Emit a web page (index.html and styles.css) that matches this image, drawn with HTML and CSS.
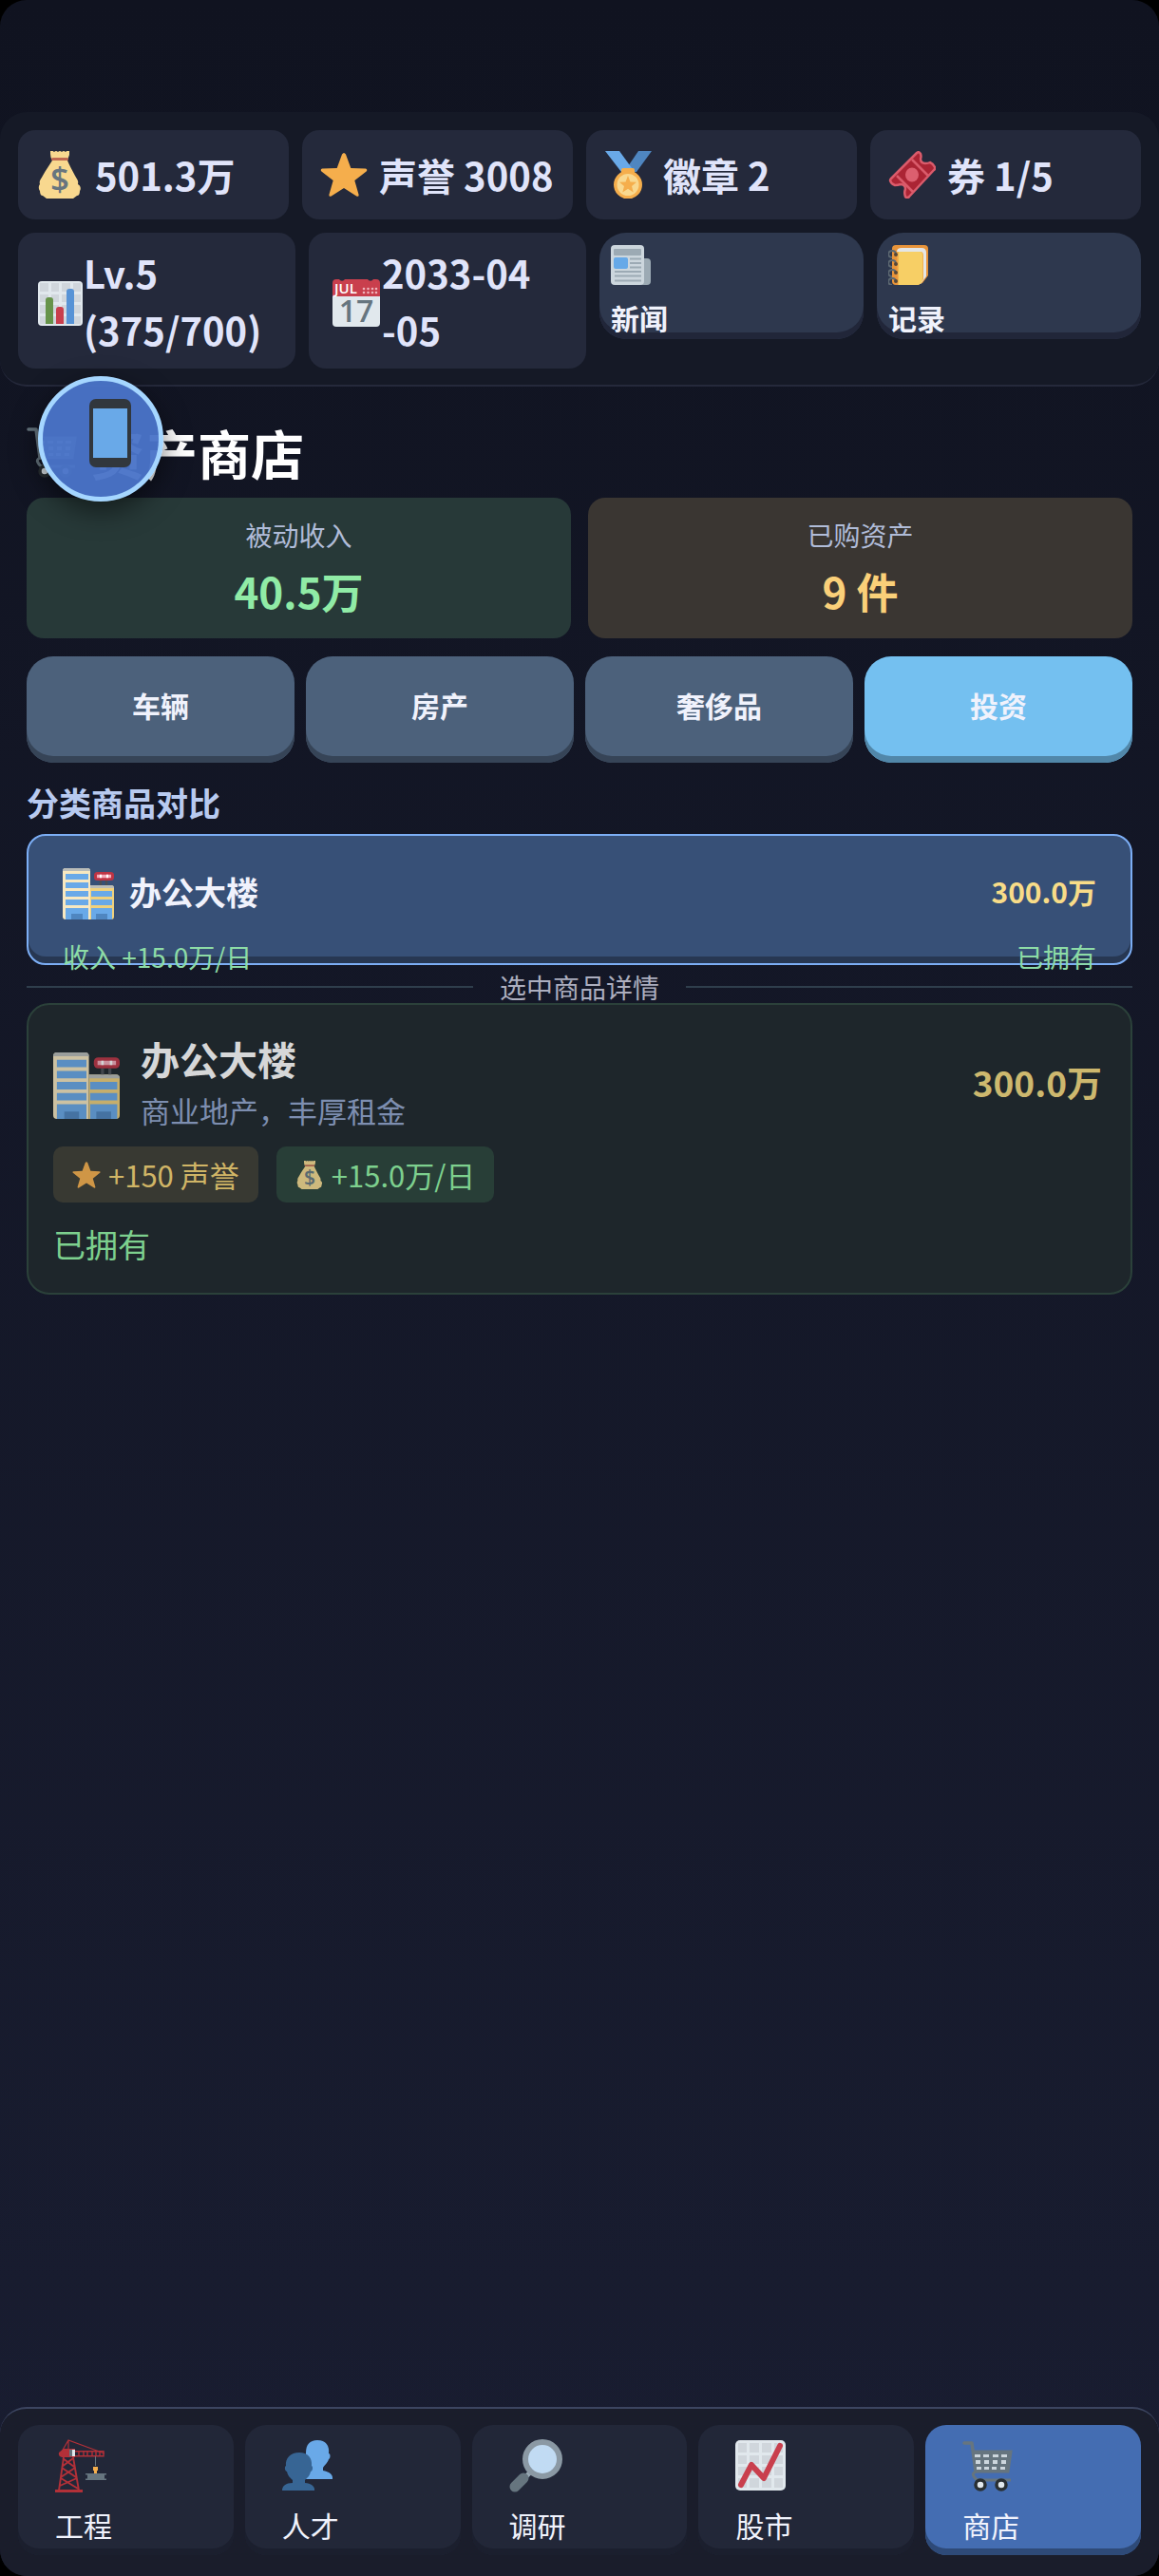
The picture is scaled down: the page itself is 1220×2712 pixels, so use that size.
FILE: index.html
```html
<!DOCTYPE html>
<html lang="zh-CN">
<head>
<meta charset="utf-8">
<meta name="viewport" content="width=device-width, initial-scale=1">
<title>资产商店</title>
<link rel="stylesheet" href="styles.css">
</head>
<body>
<svg class="sprite" aria-hidden="true">
  <symbol id="i-bag" viewBox="0 0 50 50">
    <path d="M15 0q2-1 4 1q2-2 4 0q2-2 4 0q2-2 4 0q2-2 4-1v4q-1 3-2 5H17q-2-2-2-6z" fill="#f8d88f"/>
    <path d="M17 10h16c2 5 5 10 8 16c2 4 4 5 3 9c2 1 4 4 2 7c0 3-1 5-3 5l-4 3H11l-4-3c-2 0-3-2-3-5c-2-3-1-6 0-7c-1-4 1-5 3-9c3-6 7-11 10-16z" fill="#f8d88f"/>
    <rect x="16" y="7" width="18" height="3" rx="1.500" fill="#bf6952"/>
  </symbol>
  <symbol id="i-star" viewBox="0 0 50 50">
    <path d="M27 3.500l5.300 14.500l15.500 .6q2.500 .8 .8 2.800l-12.300 9.700l4.300 14.800q.3 2.700-2.300 1.700L25 39.100L11.700 47.600q-2.600 1-2.300-1.700l4.300-14.800L1.400 21.400q-1.700-2 .8-2.800l15.500-.6L23 3.500q2-3 4 0z" fill="#f5ae4c"/>
  </symbol>
  <symbol id="i-medal" viewBox="0 0 50 50">
    <path d="M36 0h14L34 22H21z" fill="#4f86c0"/><path d="M1 0h15l16 22H18z" fill="#69a9e8"/>
    <rect x="18" y="18" width="14" height="7" rx="2" fill="#f5ae4c"/>
    <circle cx="25" cy="35.500" r="15" fill="#f5ae4c"/><circle cx="25" cy="35.500" r="11.500" fill="#f8d88f"/>
    <path d="M25 26l2.500 6.500l6.500 .3l-5 4.200l1.700 6.500L25 39.800l-5.700 3.700L21 37l-5-4.200l6.500-.3z" fill="#f5ae4c"/>
  </symbol>
  <symbol id="i-ticket" viewBox="0 0 50 50">
    <path d="M30 2q2-2 4 1q1 3 0 5q0 5 5 5q3 0 5-1q3 1 5 5q.500 2-1 3L22 48q-2 2-4 0q-1.500-4 0-8q0-5-5-5q-3 1-6 1q-4-1-5-5q0-1 1-2z" fill="#ab2434" stroke="#da5b6b" stroke-width="2.500" stroke-linejoin="round"/>
    <path d="M25 9l17 17M9 26l17 17" stroke="#da5b6b" stroke-width="2.500"/>
    <ellipse cx="25" cy="25" rx="7" ry="7.500" fill="#dc5f6f"/>
  </symbol>
  <symbol id="i-bars" viewBox="0 0 50 50">
    <rect x="2" y="2" width="47" height="47" rx="4" fill="#e1e8ed"/>
    <path d="M4 4h9v9H4zM16 4h8v9h-8zM27 4h9v9h-9zM39 4h8v9h-8zM4 16h9v8H4zM16 16h8v8h-8zM27 16h9v8h-9zM39 16h8v8h-8zM4 27h9v9H4zM16 27h8v9h-8zM27 27h9v9h-9zM39 27h8v9h-8zM4 39h9v8H4zM16 39h8v8h-8zM27 39h9v8h-9zM39 39h8v8h-8z" fill="#d0d6dc"/>
    <path d="M10 47V22a3 3 0 0 1 3-3h2a3 3 0 0 1 3 3v25z" fill="#66934a"/><path d="M21 47V32a3 3 0 0 1 3-3h2a3 3 0 0 1 3 3v15z" fill="#c93f4d"/><path d="M32 47V13a3 3 0 0 1 3-3h2a3 3 0 0 1 3 3v34z" fill="#5793d6"/>
  </symbol>
  <symbol id="i-news" viewBox="0 0 42 42">
    <rect x="30" y="14" width="12" height="28" rx="4" fill="#9caab4"/>
    <rect width="35" height="42" rx="4" fill="#ccd6dd"/>
    <rect x="3" y="4" width="29" height="7" rx="1" fill="#9caab4"/><rect x="3" y="13" width="15" height="12" rx="2" fill="#66a9e8"/>
    <path d="M20 14.500h12M20 19h12M20 23.500h12M4 28h28M4 32.500h28M4 37.500h28" stroke="#9caab4" stroke-width="2.200"/>
  </symbol>
  <symbol id="i-book" viewBox="0 0 42 42">
    <path d="M8 0h30a4 4 0 0 1 4 4v28l-6 8l-6 2H8a4 4 0 0 1-4-4V4a4 4 0 0 1 4-4z" fill="#e8943a"/>
    <path d="M9 7q0-4 5-4h21q5 0 5 5v25l-6 8z" fill="#e4e6e6"/>
    <path d="M9 7h25q3 0 3 4v25l-5 6H10z" fill="#f2b04c"/>
    <path d="M11 7h22q3 0 3 4v24q0 7-6 7H11z" fill="#f7cf65"/>
    <g fill="none" stroke="#5d6972" stroke-width="2"><path d="M8 9a4 3.500 0 1 0-4 4M8 19a4 3.500 0 1 0-4 4M8 29a4 3.500 0 1 0-4 4M8 38a4 3.500 0 1 0-4 4"/></g>
    <g fill="#55483a"><circle cx="8" cy="10" r="2"/><circle cx="8" cy="20" r="2"/><circle cx="8" cy="29" r="2"/><circle cx="8" cy="38" r="2"/></g>
  </symbol>
  <symbol id="i-phone" viewBox="0 0 44 72">
    <rect width="44" height="72" rx="7" fill="#31373d"/><rect x="4" y="10" width="36" height="52" fill="#69a9e8"/>
  </symbol>
  <symbol id="i-office" viewBox="0 0 54 54">
    <path d="M0 3q0-3 3-3h23q3 0 3 3v51H3q-3 0-3-3z" fill="#f8e8c0"/><path d="M29 18h22q3 0 3 3v30q0 3-3 3H29z" fill="#f0d17c"/>
    <path d="M0 3q0-3 3-3h23q3 0 3 3zM29 21v-3h22q3 0 3 3z" fill="#b9bcb9"/>
    <path d="M3 6h24v6H3zM3 15h24v6H3zM3 24h24v6H3zM3 33h24v6H3zM30 24h22v6H30zM30 33h22v6H30zM3 42h24v12H3zM30 42h22v12H30z" fill="#69a9e8"/>
    <path d="M9 48h12v6H9zM35 48h12v6H35z" fill="#4f86c0"/>
    <path d="M40 13v5M46 13v5" stroke="#4a4f55" stroke-width="2.500"/>
    <rect x="33" y="4" width="21" height="9" rx="3.500" fill="#bd3444"/><path d="M36 8.500h15" stroke="#f4abba" stroke-width="3.500"/><path d="M39 8.500h2M46 8.500h2" stroke="#fff" stroke-width="3.500"/>
  </symbol>
  <symbol id="i-crane" viewBox="0 0 56 56">
    <g fill="none" stroke="#b23038">
      <path d="M7 13L14 1l38 14M14 1v14" stroke-width="1.200"/>
      <path d="M18 12.800h33v5H18zM25 13v5M30 13v5M34 13v5M39 13v5M43 13v5M47 13v5" stroke-width="1.400"/>
      <path d="M9 19L4 54M19 19l6 35M8 20l12 9M19 20L7 29M7 30l15 10M21 30L6 40M6 41l18 11M23 41L5 49" stroke-width="1.900"/>
    </g>
    <path d="M9 10h12v9H7q-4-1-3-5z" fill="#b23038"/><path d="M0 53h29v3H0z" fill="#b23038"/>
    <rect x="15" y="11" width="3" height="7" fill="#66757f"/><rect x="18" y="11" width="3" height="7" fill="#e1e8ed"/>
    <path d="M42.500 18v10" stroke="#66757f"/><path d="M40 29h5v4h-1v3h-3v-3h-1z" fill="#f5ae4c"/><path d="M32 36h22v1.500h-2v4h2V43H32v-1.500h2v-4h-2z" fill="#66757f"/>
  </symbol>
  <symbol id="i-people" viewBox="0 0 56 56">
    <path d="M37 1c9 0 13 6 12 14c2 0 2 5 0 6c-1 4-5 7-6 9v3c6 1 11 4 10 9H25V14C25 6 29 1 37 1z" fill="#69a9e8"/>
    <path d="M18 14c9 0 14 6 13 14c2 1 1 6-1 6c-1 5-4 7-6 9v3c6 0 11 4 10 8H0c0-5 4-8 11-8v-3c-2-2-5-4-6-9c-2 0-3-5-1-6c-1-8 5-14 14-14z" fill="#376594"/>
  </symbol>
  <symbol id="i-search" viewBox="0 0 56 56">
    <path d="M16 41l7-7" stroke="#99aab5" stroke-width="5"/><path d="M15 41L6 50" stroke="#66757f" stroke-width="11" stroke-linecap="round"/>
    <circle cx="35" cy="21" r="18" fill="#c1dbf3" stroke="#8b99a4" stroke-width="6"/>
  </symbol>
  <symbol id="i-trend" viewBox="0 0 56 56">
    <rect y="1" width="53" height="53" rx="5" fill="#e1e8ed"/>
    <path d="M3 4h9v10H3zM15 4h10v10H15zM28 4h10v10H28zM41 4h9v10h-9zM3 17h9v9H3zM15 17h10v9H15zM28 17h10v9H28zM41 17h9v9h-9zM3 29h9v9H3zM15 29h10v9H15zM28 29h10v9H28zM41 29h9v9h-9zM3 41h9v10H3zM15 41h10v10H15zM28 41h10v10H28zM41 41h9v10h-9z" fill="#d0d6dc"/>
    <path d="M6 48l11-21l13 14L47 7" fill="none" stroke="#c93f4d" stroke-width="6" stroke-linecap="round" stroke-linejoin="round"/>
  </symbol>
  <symbol id="i-cart" viewBox="0 0 56 56">
    <path d="M2 4h8l4 30" fill="none" stroke="#66757f" stroke-width="3.500" stroke-linecap="round" stroke-linejoin="round"/>
    <path d="M11 13h40l-3 21H14q-4 2-2 5q2 4 5 4h34" fill="none" stroke="#66757f" stroke-width="3"/>
    <path d="M11 13h40l-3 21H14z" fill="#66757f"/>
    <path d="M13 16h6v3h-6zM22 16h6v3h-6zM32 16h6v3h-6zM41 16h6v3h-6zM14 22h5v4h-5zM23 22h5v4h-5zM32 22h5v4h-5zM41 22h5v4h-5zM15 29h5v3h-5zM23 29h5v3h-5zM31 29h5v3h-5zM40 29h5v3h-5z" fill="#ccd6dd"/>
    <circle cx="19" cy="48" r="5" fill="#e1e8ed" stroke="#292f33" stroke-width="3.500"/><circle cx="41" cy="48" r="5" fill="#e1e8ed" stroke="#292f33" stroke-width="3.500"/>
  </symbol>
</svg>

<div class="app">
  <header class="topbar">
    <div class="row row-stats">
      <div class="pill"><svg class="icon" viewBox="0 0 50 50"><use href="#i-bag"/><text x="25" y="42" text-anchor="middle" class="glyph glyph-dollar">$</text></svg><span>501.3万</span></div>
      <div class="pill"><svg class="icon"><use href="#i-star"/></svg><span>声誉 3008</span></div>
      <div class="pill"><svg class="icon"><use href="#i-medal"/></svg><span>徽章 2</span></div>
      <div class="pill"><svg class="icon"><use href="#i-ticket"/></svg><span>券 1/5</span></div>
    </div>
    <div class="row row-info">
      <div class="pill pill-tall"><svg class="icon"><use href="#i-bars"/></svg><span>Lv.5<br>(375/700)</span></div>
      <div class="pill pill-tall pill-date">
        <svg class="icon" viewBox="0 0 50 50">
          <path d="M0 14h50v32a4 4 0 0 1-4 4H4a4 4 0 0 1-4-4z" fill="#e1e8ed"/>
          <path d="M0 18V4a4 4 0 0 1 4-4h3a3.500 3.500 0 0 0 6 0h24a3.500 3.500 0 0 0 6 0h3a4 4 0 0 1 4 4v14z" fill="#c93f4d"/>
          <g fill="#efb3bb"><circle cx="33" cy="10" r="1.300"/><circle cx="37.500" cy="10" r="1.300"/><circle cx="42" cy="10" r="1.300"/><circle cx="46" cy="10" r="1.300"/><circle cx="33" cy="14" r="1.300"/><circle cx="37.500" cy="14" r="1.300"/><circle cx="42" cy="14" r="1.300"/><circle cx="46" cy="14" r="1.300"/></g>
          <text x="2" y="15" class="glyph glyph-month">JUL</text>
          <text x="25" y="45" text-anchor="middle" class="glyph glyph-day">17</text>
        </svg><span>2033-04<br>-05</span>
      </div>
      <button class="quick" type="button"><svg class="icon-quick"><use href="#i-news"/></svg><span>新闻</span></button>
      <button class="quick" type="button"><svg class="icon-quick"><use href="#i-book"/></svg><span>记录</span></button>
    </div>
  </header>

  <button class="float-phone" type="button" aria-label="手机"><svg><use href="#i-phone"/></svg></button>

  <main class="shop">
    <h1 class="title"><svg class="icon-title"><use href="#i-cart"/></svg><span>资产商店</span></h1>

    <div class="summary">
      <div class="sum sum-income"><span class="sum-label">被动收入</span><strong>40.5万</strong></div>
      <div class="sum sum-assets"><span class="sum-label">已购资产</span><strong>9 件</strong></div>
    </div>

    <div class="tabs">
      <button class="tab" type="button">车辆</button>
      <button class="tab" type="button">房产</button>
      <button class="tab" type="button">奢侈品</button>
      <button class="tab tab-active" type="button">投资</button>
    </div>

    <h2 class="subtitle">分类商品对比</h2>
    <button class="compare" type="button">
      <span class="compare-main"><svg class="icon-office"><use href="#i-office"/></svg><span class="compare-name">办公大楼</span><span class="compare-price">300.0万</span></span>
      <span class="compare-foot"><span>收入 +15.0万/日</span><span>已拥有</span></span>
    </button>

    <div class="divider"><span>选中商品详情</span></div>

    <section class="detail">
      <div class="detail-head">
        <svg class="icon-big"><use href="#i-office"/></svg>
        <div class="detail-text"><h3>办公大楼</h3><p>商业地产，丰厚租金</p></div>
        <span class="detail-price">300.0万</span>
      </div>
      <div class="chips">
        <span class="chip chip-fame"><svg><use href="#i-star"/></svg>+150 声誉</span>
        <span class="chip chip-income"><svg viewBox="0 0 50 50"><use href="#i-bag"/><text x="25" y="42" text-anchor="middle" class="glyph glyph-dollar">$</text></svg>+15.0万/日</span>
      </div>
      <p class="owned">已拥有</p>
    </section>
  </main>

  <nav class="nav">
    <button type="button"><svg><use href="#i-crane"/></svg><span>工程</span></button>
    <button type="button"><svg><use href="#i-people"/></svg><span>人才</span></button>
    <button type="button"><svg><use href="#i-search"/></svg><span>调研</span></button>
    <button type="button"><svg><use href="#i-trend"/></svg><span>股市</span></button>
    <button type="button" class="nav-active"><svg><use href="#i-cart"/></svg><span>商店</span></button>
  </nav>
</div>
</body>
</html>
```
FILE: styles.css
```css
* { box-sizing: border-box; }

body {
  margin: 0;
  background: #000;
  color: #f0f2fc;
  font-family: "Noto Sans CJK SC", sans-serif;
}

h1, h2, h3, p { margin: 0; }

button {
  border: 0;
  padding: 0;
  color: inherit;
  font-family: inherit;
  text-align: left;
}

svg { display: block; flex: none; }
.sprite { position: absolute; width: 0; height: 0; }
.glyph { font-family: "Open Sans", sans-serif; font-weight: 600; }
.glyph-dollar { font-size: 35px; fill: #67757f; }
.glyph-month { font-size: 15px; fill: #fff; }
.glyph-day { font-size: 32px; fill: #66757f; }

.app {
  position: relative;
  display: flex;
  flex-direction: column;
  min-height: 100vh;
  padding-top: 118px;
  border-radius: 28px;
  background: linear-gradient(#101320, #191d31);
  overflow: hidden;
}

/* status header */
.topbar {
  display: flex;
  flex-direction: column;
  gap: 14px;
  padding: 19px 19px 17px;
  border-bottom: 2px solid #25293b;
  border-radius: 28px;
  background: #151926;
}

.row { display: grid; gap: 14px; align-items: start; }
.row-stats { grid-template-columns: repeat(4, 1fr); }
.row-info { grid-template-columns: 292fr 292fr 278fr 278fr; }

.pill {
  display: flex;
  align-items: center;
  gap: 12px;
  height: 94px;
  padding-left: 19px;
  border-radius: 18px;
  background: #24293b;
  color: #e0e4fa;
  font-size: 40px;
  font-weight: 700;
  line-height: 60px;
  white-space: nowrap;
}
.pill-tall { height: 143px; gap: 0; }
.pill-date { gap: 2px; padding-left: 25px; }
.icon { width: 50px; height: 50px; }
.pill-tall .icon { margin-top: 4px; }

.quick {
  display: flex;
  flex-direction: column;
  gap: 12px;
  height: 112px;
  padding: 13px 12px 0;
  border-radius: 28px;
  background: #2e384e;
  box-shadow: inset 0 -7px #212639;
  font-size: 30px;
  font-weight: 700;
  line-height: 44px;
}
.icon-quick { width: 42px; height: 42px; }

/* floating phone shortcut */
.float-phone {
  position: absolute;
  left: 40px;
  top: 396px;
  z-index: 2;
  width: 132px;
  height: 132px;
  padding-left: 49px;
  border: 5px solid #a5d6ff;
  border-radius: 50%;
  background: rgba(74, 116, 200, 0.96);
  box-shadow: 0 10px 28px rgba(0, 0, 0, 0.5);
}
.float-phone svg { width: 44px; height: 72px; margin-bottom: 12px; }

/* shop */
.shop { flex: 1; padding: 33px 28px 28px; }

.title {
  display: flex;
  align-items: center;
  gap: 12px;
  height: 72px;
  margin-bottom: 12px;
  color: #fff;
  font-size: 56px;
  font-weight: 700;
  line-height: 72px;
}
.icon-title { width: 56px; height: 56px; }

.summary { display: grid; grid-template-columns: 1fr 1fr; gap: 18px; }
.sum {
  display: flex;
  flex-direction: column;
  align-items: center;
  height: 148px;
  padding-top: 20px;
  border-radius: 18px;
}
.sum-label { color: #b0bcd8; font-size: 28px; line-height: 38px; }
.sum strong { font-size: 44px; line-height: 80px; font-weight: 700; }
.sum-income { background: #273938; }
.sum-income strong { color: #90eba6; }
.sum-assets { background: #3a3632; }
.sum-assets strong { color: #fad079; }

.tabs { display: grid; grid-template-columns: repeat(4, 1fr); gap: 12px; margin-top: 19px; }
.tab {
  height: 112px;
  padding-bottom: 10px;
  border-radius: 28px;
  background: #4c617b;
  box-shadow: inset 0 -7px #364457;
  font-size: 30px;
  font-weight: 700;
  text-align: center;
}
.tab-active { background: #74c0f0; box-shadow: inset 0 -7px #5187a9; }

.subtitle {
  margin: 22px 0 13px;
  color: #b8caf0;
  font-size: 34px;
  font-weight: 700;
  line-height: 40px;
}

.compare {
  display: block;
  width: 100%;
  height: 138px;
  padding: 34px 36px 0;
  border: 2px solid #7caef5;
  border-radius: 20px;
  background: #375077;
  box-shadow: inset 0 -7px #273752;
}
.compare-main { display: flex; align-items: start; height: 54px; }
.icon-office { width: 54px; height: 54px; margin-right: 16px; }
.compare-name { flex: 1; font-size: 34px; font-weight: 700; line-height: 50px; }
.compare-price { color: #f8dc88; font-size: 30px; font-weight: 700; line-height: 48px; }
.compare-foot {
  display: flex;
  justify-content: space-between;
  margin-top: 20px;
  color: #8ddca6;
  font-size: 28px;
  line-height: 38px;
}

.divider {
  display: flex;
  align-items: center;
  gap: 28px;
  height: 40px;
  padding-top: 6px;
  color: #acaebf;
  font-size: 28px;
  line-height: 34px;
}
.divider::before, .divider::after { content: ""; flex: 1; height: 2px; background: #2f3e4c; }

.detail {
  padding: 26px 30px 26px 26px;
  border: 2px solid #2b413a;
  border-radius: 24px;
  background: #1e262b;
}
.detail-head { display: flex; align-items: center; }
.icon-big { width: 70px; height: 70px; margin: 8px 22px 0 0; opacity: 0.8; }
.detail-text { flex: 1; }
.detail-text h3 { color: #d6d7d8; font-size: 41px; font-weight: 700; line-height: 60px; }
.detail-text p { color: #7d8eb0; font-size: 31px; line-height: 50px; }
.detail-price { color: #cdb86e; font-size: 37px; font-weight: 700; }

.chips { display: flex; gap: 19px; margin-top: 13px; }
.chip {
  display: flex;
  align-items: center;
  gap: 8px;
  height: 59px;
  padding: 0 20px;
  border-radius: 10px;
  font-size: 31px;
  line-height: 58px;
}
.chip svg { width: 30px; height: 30px; opacity: 0.8; }
.chip-fame { background: #383932; color: #d0b566; }
.chip-income { background: #283e37; color: #7dd08e; }
.owned { margin-top: 19px; color: #7dd08e; font-size: 34px; line-height: 50px; }

/* bottom navigation */
.nav {
  display: grid;
  grid-template-columns: repeat(5, 1fr);
  gap: 12px;
  padding: 17px 19px 22px;
  border-top: 2px solid #3c4560;
  border-radius: 28px 28px 0 0;
  background: #1a1d2b;
}
.nav button {
  display: flex;
  flex-direction: column;
  gap: 12px;
  height: 137px;
  padding: 15px 39px 0;
  border-radius: 22px;
  background: #222738;
  box-shadow: inset 0 -7px #1b1f2e;
  font-size: 30px;
  line-height: 44px;
}
.nav svg { width: 56px; height: 56px; }
.nav .nav-active { background: #446db2; box-shadow: inset 0 -7px #2e4a78; }
```
